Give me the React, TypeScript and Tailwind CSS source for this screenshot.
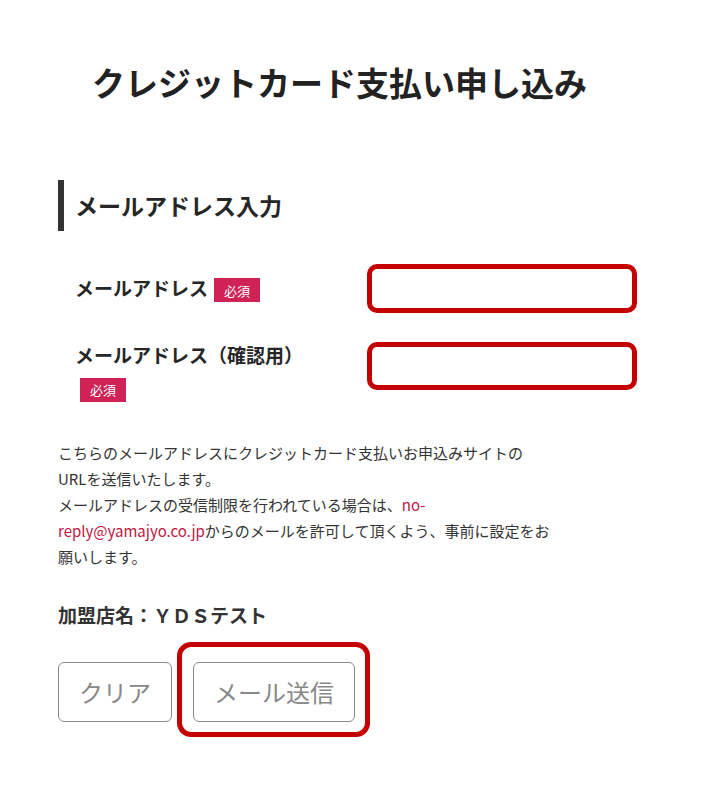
import * as React from 'react'

const font = "font-['Noto_Sans_CJK_JP','Noto_Sans',sans-serif]"

function Required() {
  return (
    <span className="inline-flex items-center justify-center w-[46px] h-[24px] bg-[#cf2358] text-white text-[13px] font-normal leading-none ml-[6px] align-middle">
      必須
    </span>
  )
}

export default function App() {
  return (
    <div className={`${font} bg-white min-h-[807px] w-full text-[#262626] pb-10`}>
      {/* タイトル */}
      <h1 className="pt-[62px] pl-[92px] text-[33px] leading-[40px] font-bold tracking-normal text-[#222]">
        クレジットカード支払い申し込み
      </h1>

      <div className="pl-[58px]">
        {/* セクション見出し */}
        <div className="mt-[78px] h-[51px] border-l-[6px] border-[#333] pl-[11px] flex items-center">
          <h2 className="text-[23px] font-bold">メールアドレス入力</h2>
        </div>

        {/* 入力欄 */}
        <div className="pl-[17px] mt-[33px]">
          <div className="flex items-center h-[49px]">
            <div className="w-[292px] text-[19px] font-bold leading-[26px]">
              メールアドレス
              <Required />
            </div>
            <div className="w-[270px] h-[49px] border-[5px] border-[#c40000] rounded-[10px]" />
          </div>

          <div className="flex items-start mt-[29px]">
            <div className="w-[292px]">
              <div className="text-[19px] font-bold leading-[26px]">メールアドレス（確認用）</div>
              <div className="mt-[7px] -ml-[1px]">
                <Required />
              </div>
            </div>
            <div className="w-[270px] h-[48px] border-[5px] border-[#c40000] rounded-[10px]" />
          </div>
        </div>

        {/* 説明文 */}
        <p className="mt-[38px] text-[15px] leading-[26px] text-[#333] whitespace-nowrap">
          こちらのメールアドレスにクレジットカード支払いお申込みサイトの
          <br />
          URLを送信いたします。
          <br />
          メールアドレスの受信制限を行われている場合は、<span className="text-[#c0163f]">no-</span>
          <br />
          <span className="text-[#c0163f]">reply@yamajyo.co.jp</span>からのメールを許可して頂くよう、事前に設定をお
          <br />
          願いします。
        </p>

        <p className="mt-[32px] text-[19px] font-bold leading-[26px] text-[#333]">加盟店名：ＹＤＳテスト</p>

        {/* ボタン */}
        <div className="mt-[14px] flex items-start">
          <button className="mt-[20px] w-[114px] h-[60px] border border-[#8a8a8a] rounded-[6px] text-[24px] text-[#888] bg-white">
            クリア
          </button>
          <div className="ml-[5px] border-[5px] border-[#c40000] rounded-[14px] pt-[15px] pl-[11px] pr-[10px] pb-[10px]">
            <button className="w-[162px] h-[60px] border border-[#8a8a8a] rounded-[6px] text-[24px] text-[#888] bg-white">
              メール送信
            </button>
          </div>
        </div>
      </div>
    </div>
  )
}
